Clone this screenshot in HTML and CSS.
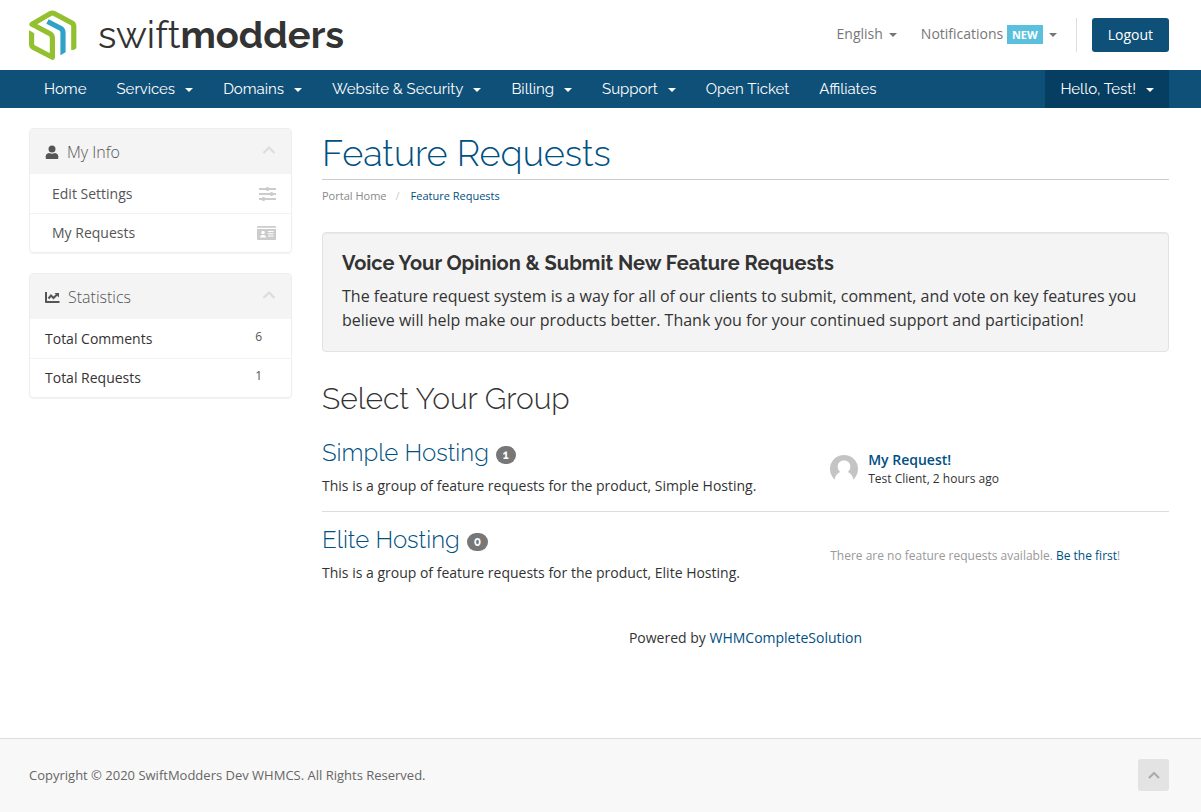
FILE: index.html
```html
<!DOCTYPE html>
<html lang="en">
<head>
    <meta charset="UTF-8">
    <meta name="viewport" content="width=device-width, initial-scale=1.0">
    <title>Feature Requests - SwiftModders</title>
    <link rel="stylesheet" href="styles.css">
</head>
<body>
<header class="header container">
    <a href="#" class="logo">
        <svg width="48" height="50" viewBox="0 0 48 50" fill="none" stroke-width="5.2" stroke-linejoin="round">
            <path stroke="#93c02e" d="M2.600 20.500V34Q2.600 36.500 4.500 37.500L23.400 47.200V28Q23.400 25 21 23.700L3 14.200L21.500 3.500Q23.300 2.500 25.200 3.500L43 13Q44.800 14 44.800 16.500V40"/>
            <path stroke="#2ea3c7" d="M18.500 11.500L31.500 18.200Q34 19.600 34 22.500V45"/>
            <path fill="#fff" d="M0 20l5.500 3.500V18H0zM42 41.500l6-3.500v4h-6zM31 45.500l6-3.500v5h-6z"/>
        </svg>
        <span class="logo-text">swift<b>modders</b></span>
    </a>
    <div class="top-nav">
        <button type="button" class="top-link">English<span class="caret"></span></button>
        <button type="button" class="top-link">Notifications <span class="label-new">NEW</span><span class="caret"></span></button>
        <div class="logout-box"><a href="#" class="btn-logout">Logout</a></div>
    </div>
</header>

<nav class="navbar">
    <div class="container nav-row">
        <a href="#" class="nav-item">Home</a>
        <button type="button" class="nav-item">Services<span class="caret"></span></button>
        <button type="button" class="nav-item">Domains<span class="caret"></span></button>
        <button type="button" class="nav-item">Website &amp; Security<span class="caret"></span></button>
        <button type="button" class="nav-item">Billing<span class="caret"></span></button>
        <button type="button" class="nav-item">Support<span class="caret"></span></button>
        <a href="#" class="nav-item">Open Ticket</a>
        <a href="#" class="nav-item">Affiliates</a>
        <button type="button" class="nav-item nav-account">Hello, Test!<span class="caret"></span></button>
    </div>
</nav>

<div class="container page">
    <aside class="sidebar">
        <section class="panel">
            <h3 class="panel-heading">
                <svg class="icon" width="14" height="16" viewBox="0 0 14 16"><path fill="#555" d="M7 1.500a3.500 3.500 0 1 1 0 7a3.500 3.500 0 0 1 0-7zM4 9c2 1 4 1 6 0c2.200.2 3.300 1.700 3.300 3.500V14q0 1-1 1H1.700q-1 0-1-1v-1.500C.700 10.700 1.800 9.200 4 9z"/></svg>
                My Info
                <svg class="chevron" width="14" height="8" viewBox="0 0 14 8"><path fill="none" stroke="#ddd" stroke-width="2.200" d="M1.500 7L7 1.500L12.500 7"/></svg>
            </h3>
            <a href="#" class="panel-item panel-link">Edit Settings
                <svg width="17" height="14" viewBox="0 0 17 14" fill="#ccc"><path d="M0 1h17v2H0zM0 6h17v2H0zM0 11h17v2H0z"/><circle cx="8.500" cy="2" r="2"/><circle cx="12.500" cy="7" r="2"/><circle cx="4.500" cy="12" r="2"/></svg>
            </a>
            <a href="#" class="panel-item panel-link">My Requests
                <svg width="19" height="14" viewBox="0 0 19 14"><path fill="#ccc" d="M1 0h17q1 0 1 1v.700H0V1q0-1 1-1zM0 3h19v10q0 1-1 1H1q-1 0-1-1z"/><circle cx="6" cy="6.500" r="1.800" fill="#fff"/><path fill="#fff" d="M3 11.500q0-2.500 2-2.500h2q2 0 2 2.500zM11 5h5.500v1H11zM11 7.200h5.500v1H11zM11 9.400h5.500v1H11z"/></svg>
            </a>
        </section>
        <section class="panel">
            <h3 class="panel-heading">
                <svg class="icon" width="15" height="16" viewBox="0 0 15 16"><path fill="#555" d="M0 3h2v9h12.500v2H1q-1 0-1-1z"/><path fill="none" stroke="#555" stroke-width="2" d="M3.500 9.500L6 6.500L8.500 9L12 5.500"/><path fill="#555" d="M9.500 4H14v4.500z"/></svg>
                Statistics
                <svg class="chevron" width="14" height="8" viewBox="0 0 14 8"><path fill="none" stroke="#ddd" stroke-width="2.200" d="M1.500 7L7 1.500L12.500 7"/></svg>
            </h3>
            <div class="panel-item">Total Comments <span class="count">6</span></div>
            <div class="panel-item">Total Requests <span class="count">1</span></div>
        </section>
    </aside>

    <main class="main">
        <h1>Feature Requests</h1>
        <ol class="breadcrumb">
            <li><a href="#">Portal Home</a></li>
            <li class="active">Feature Requests</li>
        </ol>

        <section class="well">
            <h2>Voice Your Opinion &amp; Submit New Feature Requests</h2>
            <p>The feature request system is a way for all of our clients to submit, comment, and vote on key features you believe will help make our products better. Thank you for your continued support and participation!</p>
        </section>

        <h2 class="group-title">Select Your Group</h2>
        <div class="group">
            <div class="group-info">
                <h3><a href="#">Simple Hosting</a> <span class="badge">1</span></h3>
                <p>This is a group of feature requests for the product, Simple Hosting.</p>
            </div>
            <div class="latest">
                <svg class="avatar" width="28" height="28" viewBox="0 0 28 28">
                    <circle cx="14" cy="14" r="14" fill="#c4c4c4"/>
                    <path fill="#fff" d="M14 5.500c3.800 0 6.300 2.500 6.300 6c0 2.300-1 4.400-2.600 5.600c3 1 5 3.600 5.600 7.400L24 28H4L4.700 24.500c.600-3.800 2.600-6.400 5.600-7.400c-1.600-1.200-2.600-3.300-2.600-5.600c0-3.500 2.500-6 6.300-6z"/>
                </svg>
                <div>
                    <a href="#" class="latest-title">My Request!</a>
                    <div class="latest-meta">Test Client, 2 hours ago</div>
                </div>
            </div>
        </div>
        <div class="group">
            <div class="group-info">
                <h3><a href="#">Elite Hosting</a> <span class="badge">0</span></h3>
                <p>This is a group of feature requests for the product, Elite Hosting.</p>
            </div>
            <p class="empty">There are no feature requests available. <a href="#">Be the first</a>!</p>
        </div>

        <p class="powered">Powered by <a href="#">WHMCompleteSolution</a></p>
    </main>
</div>

<footer class="footer">
    <div class="container footer-row">
        <p>Copyright © 2020 SwiftModders Dev WHMCS. All Rights Reserved.</p>
        <a href="#" class="back-to-top" aria-label="Back to top">
            <svg width="12" height="8" viewBox="0 0 12 8"><path fill="none" stroke="#aaa" stroke-width="2" d="M1 7L6 2L11 7"/></svg>
        </a>
    </div>
</footer>
</body>
</html>
```
FILE: styles.css
```css
* {
    box-sizing: border-box;
}

body {
    margin: 0;
    display: flex;
    flex-direction: column;
    min-height: 100vh;
    background-color: #fff;
    color: #333;
    font-family: "Open Sans", sans-serif;
    font-size: 14px;
    line-height: 20px;
}

h1, h2, h3, p, ol {
    margin: 0;
    padding: 0;
}

a {
    color: #005082;
    text-decoration: none;
}

button {
    border: none;
    background: none;
    font: inherit;
    cursor: pointer;
}

h1, h2, .group h3, .nav-item, .logo-text {
    font-family: Raleway, Lato, sans-serif;
}

svg {
    display: block;
    flex: none;
}

.container {
    width: 100%;
    padding: 0 32px 0 29px;
}

.caret {
    display: inline-block;
    border-top: 4px solid;
    border-left: 4px solid transparent;
    border-right: 4px solid transparent;
    vertical-align: middle;
}

/* Header */
.header {
    display: flex;
    justify-content: space-between;
    align-items: center;
    height: 70px;
}

.logo {
    display: flex;
    align-items: center;
    gap: 21px;
    color: #333;
}

.logo-text {
    font-size: 38px;
    line-height: 50px;
}

.top-nav {
    display: flex;
    align-items: center;
    gap: 24px;
}

.top-link {
    padding: 0 0 2px;
    color: #777;
}

.top-link .caret {
    margin-left: 6px;
}

.label-new {
    display: inline-block;
    padding: 0 5px;
    background-color: #5bc0de;
    color: #fff;
    font-size: 11px;
    font-weight: bold;
    line-height: 19px;
}

.logout-box {
    margin-left: -5px;
    padding-left: 15px;
    border-left: 1px solid #ddd;
}

.btn-logout {
    display: block;
    padding: 7px 16px;
    border-radius: 3px;
    background-color: #0f5078;
    color: #fff;
}

/* Main navigation */
.navbar {
    background-color: #0f5078;
}

.nav-row {
    display: flex;
}

.nav-item {
    padding: 9px 15px;
    color: #fff;
    font-size: 15px;
    line-height: 20px;
    white-space: nowrap;
}

.nav-item .caret {
    margin-left: 10px;
}

.nav-account {
    margin-left: auto;
    background-color: #063e61;
}

/* Page layout */
.page {
    display: grid;
    grid-template-columns: 263fr 847fr;
    gap: 30px;
    padding-top: 20px;
    padding-bottom: 60px;
}

/* Sidebar panels */
.panel {
    margin-bottom: 20px;
    border: 1px solid #eee;
    border-radius: 4px;
    box-shadow: 0 1px 1px rgba(0, 0, 0, 0.05);
}

.panel-heading {
    display: flex;
    align-items: center;
    gap: 8px;
    height: 45px;
    padding: 0 15px;
    background-color: #f4f4f4;
    color: #555;
    font-size: 16px;
    font-weight: 300;
}

.chevron {
    margin: 0 0 4px auto;
}

.panel-item {
    display: flex;
    justify-content: space-between;
    align-items: center;
    height: 39px;
    padding: 0 15px;
}

.panel-item + .panel-item {
    border-top: 1px solid #f2f2f2;
}

.panel-link {
    padding-left: 22px;
    color: #555;
}

.count {
    margin-right: 14px;
    padding-bottom: 4px;
    color: #555;
    font-size: 12px;
}

/* Content */
h1 {
    padding: 5px 0;
    border-bottom: 1px solid #ccc;
    color: #005082;
    font-size: 36px;
    font-weight: 300;
    line-height: 41px;
}

.breadcrumb {
    display: flex;
    padding: 6px 0;
    list-style: none;
    font-size: 11px;
}

.breadcrumb a {
    color: #888;
}

.breadcrumb .active {
    color: #005082;
}

.breadcrumb li + li::before {
    content: "/";
    padding: 0 11px 0 9px;
    color: #ccc;
}

.well {
    margin-top: 20px;
    padding: 19px;
    border: 1px solid #e3e3e3;
    border-radius: 4px;
    background-color: #f4f4f4;
    box-shadow: inset 0 1px 1px rgba(0, 0, 0, 0.05);
}

.well h2 {
    margin-bottom: 10px;
    font-size: 20px;
    font-weight: bold;
    line-height: 22px;
}

.well p {
    padding-right: 10px;
    font-size: 16px;
    line-height: 24px;
}

.group-title {
    margin: 30px 0 10px;
    font-size: 30px;
    font-weight: 300;
    line-height: 33px;
}

.group {
    display: grid;
    grid-template-columns: 3fr 2fr;
    align-items: center;
    padding: 10px 0 15px;
}

.group + .group {
    border-top: 1px solid #ddd;
}

.group h3 {
    display: flex;
    align-items: center;
    gap: 7px;
    margin-bottom: 5px;
    font-size: 24px;
    font-weight: 300;
    line-height: 36px;
}

.badge {
    margin-top: 4px;
    padding: 3px 7px;
    border-radius: 10px;
    background-color: #777;
    color: #fff;
    font-size: 12px;
    font-weight: bold;
    line-height: 12px;
}

.latest {
    display: flex;
    align-items: center;
    gap: 10px;
    padding-top: 6px;
}

.latest-title {
    font-weight: 600;
}

.latest-meta {
    font-size: 12px;
    line-height: 18px;
}

.empty {
    padding-top: 6px;
    color: #999;
    font-size: 12px;
}

.powered {
    margin-top: 30px;
    text-align: center;
}

/* Footer */
.footer {
    margin-top: auto;
    border-top: 1px solid #ddd;
    background-color: #f8f8f8;
}

.footer-row {
    display: flex;
    justify-content: space-between;
    align-items: center;
    padding-top: 20px;
    padding-bottom: 21px;
    color: #666;
    font-size: 13px;
}

.back-to-top {
    display: flex;
    justify-content: center;
    align-items: center;
    width: 31px;
    height: 32px;
    border-radius: 3px;
    background-color: #e3e3e3;
}
```
